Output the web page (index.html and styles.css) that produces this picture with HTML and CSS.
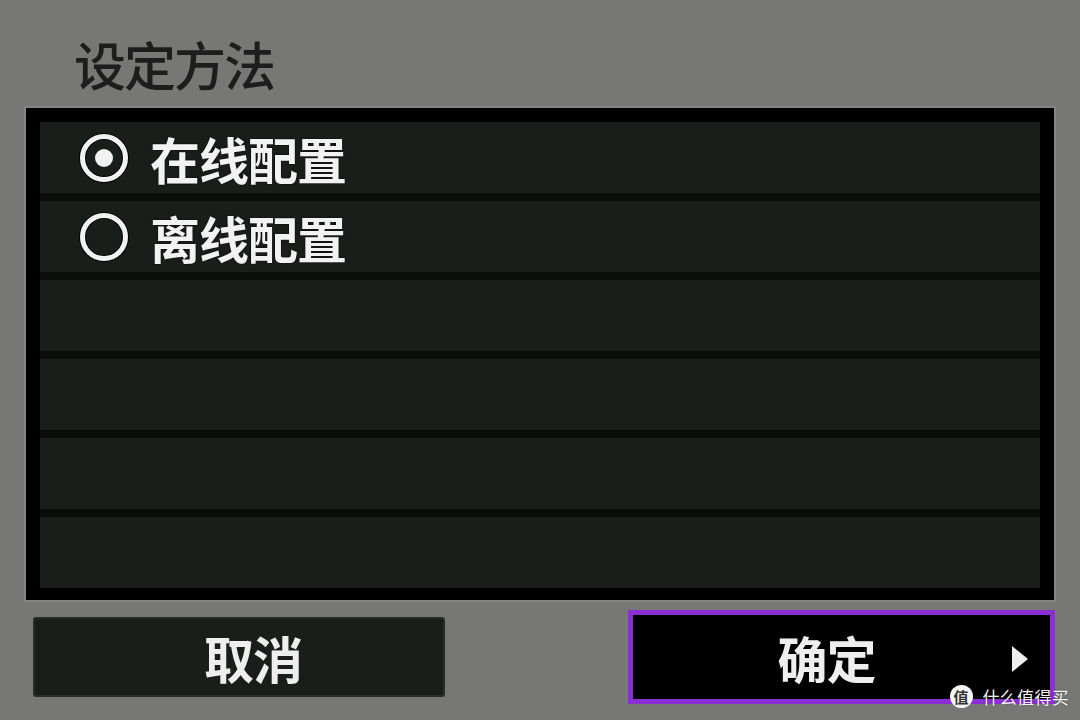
FILE: index.html
```html
<!DOCTYPE html>
<html lang="zh-CN">
<head>
<meta charset="utf-8">
<title>设定方法</title>
<link rel="stylesheet" href="styles.css">
</head>
<body>
<div class="screen">
  <h1 class="title">设定方法</h1>

  <div class="panel">
    <div class="list">
      <div class="row">
        <span class="radio checked"></span>
        <span class="label">在线配置</span>
      </div>
      <div class="row">
        <span class="radio"></span>
        <span class="label">离线配置</span>
      </div>
      <div class="row"></div>
      <div class="row"></div>
      <div class="row"></div>
      <div class="row"></div>
    </div>
  </div>

  <div class="buttons">
    <div class="btn cancel">取消</div>
    <div class="btn ok">确定<span class="arrow"></span></div>
  </div>

  <div class="mark">
    <span class="mark-logo">值</span>
    <span class="mark-text">什么值得买</span>
  </div>
</div>
</body>
</html>
```

FILE: styles.css
```css
* {box-sizing: border-box;}

body {
  margin: 0;
  background-color: #777875;
  font-family: "Noto Sans CJK SC", "Noto Sans", sans-serif;
}

.screen {
  position: relative;
  width: 1080px;
  height: 720px;
  overflow: hidden;
}

.title {
  margin: 0;
  height: 108px;
  padding: 38px 0 0 74px;
  font-size: 52px;
  line-height: 52px;
  font-weight: 500;
  color: #1c1d1c;
  letter-spacing: -2px;
}

.panel {
  margin-left: 26px;
  width: 1028px;
  height: 492px;
  border: 14px solid #000;
  border-bottom-width: 12px;
  background: #000;
  box-shadow: 0 0 0 2px #858682;
}

.list {
  display: flex;
  flex-direction: column;
  gap: 8px;
  background: #0b0d0b;
}

.row {
  height: 71px;
  background: #1a1e1b;
  display: flex;
  align-items: center;
  padding-left: 40px;
}

.radio {
  width: 48px;
  height: 48px;
  border: 5px solid #f2f2f2;
  border-radius: 50%;
  box-shadow: 0 0 0 1px #000, inset 0 0 0 1px #000;
  display: flex;
  align-items: center;
  justify-content: center;
}

.radio.checked::after {
  content: "";
  width: 18px;
  height: 18px;
  border-radius: 50%;
  background: #f2f2f2;
}

.label {
  margin-left: 22px;
  font-size: 50px;
  line-height: 50px;
  font-weight: 700;
  color: #f2f2f2;
  letter-spacing: -1px;
  text-shadow: 0 0 2px #000;
}

.buttons {
  display: flex;
  align-items: center;
  height: 114px;
  padding-left: 33px;
}

.btn {
  display: flex;
  align-items: center;
  justify-content: center;
  font-size: 50px;
  font-weight: 700;
  color: #eeeeee;
  letter-spacing: -1px;
}

.cancel {
  width: 412px;
  height: 80px;
  padding-left: 28px;
  background: #1a1e1b;
  border: 2px solid #2a2c2a;
  border-radius: 3px;
}

.ok {
  position: relative;
  margin-left: 183px;
  width: 427px;
  height: 94px;
  padding-right: 30px;
  background: #000;
  border: 5px solid #8a2fd4;
}

.arrow {
  position: absolute;
  right: 22px;
  top: 31px;
  width: 0;
  height: 0;
  border-top: 13px solid transparent;
  border-bottom: 13px solid transparent;
  border-left: 16px solid #eeeeee;
}

/* site watermark, bottom right corner */
.mark {
  position: absolute;
  right: 11px;
  bottom: 12px;
  display: flex;
  align-items: center;
  gap: 10px;
}

.mark-logo {
  width: 23px;
  height: 23px;
  border-radius: 50%;
  background: #f4f4f4;
  color: #333;
  font-size: 15px;
  line-height: 23px;
  font-weight: 700;
  text-align: center;
}

.mark-text {
  font-size: 17px;
  line-height: 23px;
  color: #f4f4f4;
  letter-spacing: 0.3px;
  text-shadow: 0 0 2px rgba(0, 0, 0, 0.4);
}
```
